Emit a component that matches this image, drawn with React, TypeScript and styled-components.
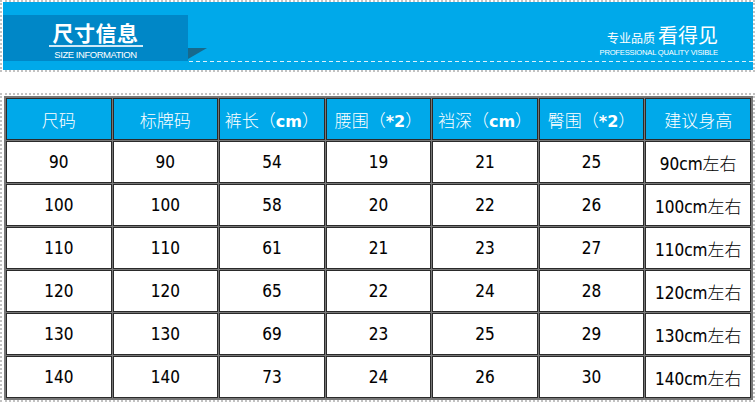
import styled, { createGlobalStyle } from 'styled-components'

const GlobalStyle = createGlobalStyle`
  html, body {
    margin: 0;
    padding: 0;
    background: #fff;
  }
  body {
    font-family: "Liberation Sans", "Noto Sans CJK SC", sans-serif;
  }
`

const Page = styled.div`
  width: 755px;
  box-sizing: border-box;
`

const Section = styled.section<{ gap?: number }>`
  box-sizing: border-box;
  border: 2px dotted #c2c2c2;
  margin-top: ${props => props.gap || 0}px;
`

const Banner = styled.div`
  display: flex;
  align-items: flex-start;
  height: 68px;
  margin-left: 1px;
  background: #00a9ea;
`

const TitleBand = styled.div`
  display: flex;
  flex-direction: column;
  align-items: center;
  width: 185px;
  height: 46px;
  margin-top: 13px;
  background: #0087c7;
`

const Title = styled.h1`
  margin: 5px 0 0;
  padding: 0 4px 1px;
  font-family: "Noto Sans CJK SC", sans-serif;
  font-size: 21px;
  font-weight: 700;
  line-height: 24px;
  letter-spacing: 0.5px;
  color: #fff;
  border-bottom: 2px solid #cfe9f7;
`

const Subtitle = styled.span`
  margin-top: 3px;
  font-family: "Liberation Sans", sans-serif;
  font-size: 9.5px;
  line-height: 10px;
  letter-spacing: -0.45px;
  color: #fff;
`

const Rest = styled.div`
  position: relative;
  flex: 1;
  display: flex;
  flex-direction: column;
  align-items: flex-end;
  justify-content: flex-end;
  height: 47px;
  margin-top: 13px;

  &::before {
    content: '';
    position: absolute;
    left: 0;
    top: 33px;
    width: 0;
    height: 0;
    border-top: 11px solid #17698c;
    border-right: 19px solid transparent;
  }
`

const Slogan = styled.div`
  display: flex;
  flex-direction: column;
  align-items: flex-end;
  margin: 0 35px 4px 0;
  color: #fff;
`

const SloganTop = styled.div`
  display: flex;
  align-items: baseline;
  gap: 3px;
  font-family: "Noto Sans CJK SC", sans-serif;
  line-height: 1;
`

const SloganSmall = styled.span`
  font-size: 12px;
`

const SloganBig = styled.span`
  font-size: 20px;
`

const SloganEn = styled.span`
  margin-top: 4px;
  font-family: "Liberation Sans", sans-serif;
  font-size: 7.6px;
  line-height: 8px;
  letter-spacing: -0.2px;
`

const Dashes = styled.div`
  align-self: stretch;
  height: 1px;
  margin-left: 1px;
  background: repeating-linear-gradient(
    to right,
    rgba(255, 255, 255, 0.85) 0 4px,
    transparent 4px 7px
  );
`

const TableWrap = styled.div`
  padding: 1px 0 0 2px;
`

const Table = styled.table`
  width: 749px;
  table-layout: fixed;
  border-collapse: separate;
  border-spacing: 1px;
  border: 1px solid #777;
  background: #777;
`

const Cell = styled.td<{ head?: boolean }>`
  height: 40px;
  padding: 0;
  border: 1px solid #2a2a2a;
  text-align: center;
  white-space: nowrap;
  overflow: hidden;
  background: ${props => (props.head ? '#00a9ea' : '#fff')};
  color: ${props => (props.head ? '#fff' : '#000')};
  font-family: ${props =>
    props.head
      ? '"Noto Sans CJK SC", sans-serif'
      : '"DejaVu Sans Condensed", "DejaVu Sans", "Noto Sans CJK SC", sans-serif'};
  font-size: 17px;
  font-weight: ${props => (props.head ? 300 : 'normal')};
  -webkit-text-stroke: ${props => (props.head ? 0 : '0.1px #000')};
`

const Latin = styled.span`
  font-family: "DejaVu Sans", sans-serif;
  font-size: 16px;
  font-weight: 700;
`

const Cjk = styled.span`
  font-family: "Noto Sans CJK SC", sans-serif;
  font-size: 17px;
  font-weight: 300;
  -webkit-text-stroke: 0;
`

const heads: [string, string?, string?][] = [
  ['尺码'],
  ['标牌码'],
  ['裤长（', 'cm', '）'],
  ['腰围（', '*2', '）'],
  ['裆深（', 'cm', '）'],
  ['臀围（', '*2', '）'],
  ['建议身高']
]

const rows = [
  [90, 90, 54, 19, 21, 25, 90],
  [100, 100, 58, 20, 22, 26, 100],
  [110, 110, 61, 21, 23, 27, 110],
  [120, 120, 65, 22, 24, 28, 120],
  [130, 130, 69, 23, 25, 29, 130],
  [140, 140, 73, 24, 26, 30, 140]
]

function App() {
  return (
    <Page>
      <GlobalStyle />
      <Section>
        <Banner>
          <TitleBand>
            <Title>尺寸信息</Title>
            <Subtitle>SIZE INFORMATION</Subtitle>
          </TitleBand>
          <Rest>
            <Slogan>
              <SloganTop>
                <SloganSmall>专业品质</SloganSmall>
                <SloganBig>看得见</SloganBig>
              </SloganTop>
              <SloganEn>PROFESSIONAL QUALITY VISIBLE</SloganEn>
            </Slogan>
            <Dashes />
          </Rest>
        </Banner>
      </Section>
      <Section gap={21}>
        <TableWrap>
          <Table>
            <thead>
              <tr>
                {heads.map(([a, b, c]) => (
                  <Cell as="th" head key={a}>
                    {a}
                    {b && <Latin>{b}</Latin>}
                    {c}
                  </Cell>
                ))}
              </tr>
            </thead>
            <tbody>
              {rows.map(row => (
                <tr key={row[0]}>
                  {row.map((v, i) =>
                    i === 6 ? (
                      <Cell key={i}>
                        {v}cm<Cjk>左右</Cjk>
                      </Cell>
                    ) : (
                      <Cell key={i}>{v}</Cell>
                    )
                  )}
                </tr>
              ))}
            </tbody>
          </Table>
        </TableWrap>
      </Section>
    </Page>
  )
}

export default App
